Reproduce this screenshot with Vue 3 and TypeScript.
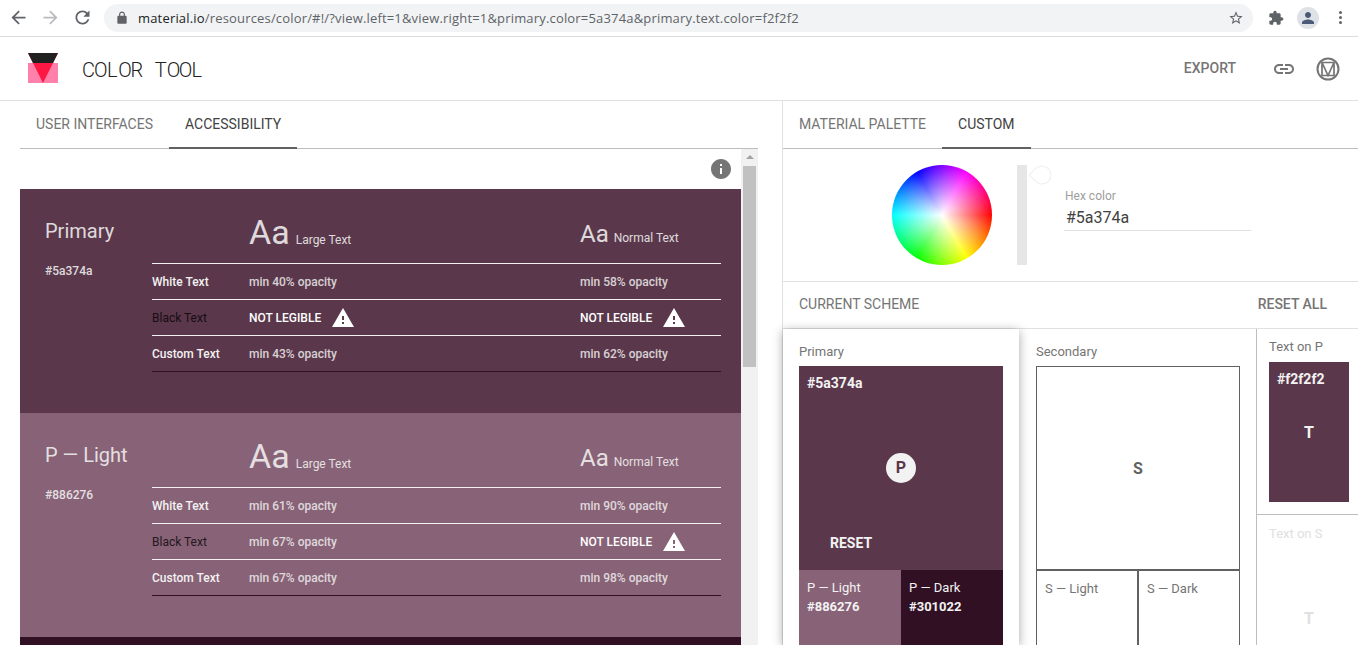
<script setup lang="ts">
interface Row { label: string; large: string; normal: string; warnLarge?: boolean; warnNormal?: boolean; kind: string }
interface Card { name: string; hex: string; bg: string; rows: Row[] }
const cards: Card[] = [
  { name: 'Primary', hex: '#5a374a', bg: '#5a374a', rows: [
    { label: 'White Text', large: 'min 40% opacity', normal: 'min 58% opacity', kind: 'white' },
    { label: 'Black Text', large: 'NOT LEGIBLE', normal: 'NOT LEGIBLE', warnLarge: true, warnNormal: true, kind: 'black' },
    { label: 'Custom Text', large: 'min 43% opacity', normal: 'min 62% opacity', kind: 'custom' },
  ] },
  { name: 'P — Light', hex: '#886276', bg: '#886276', rows: [
    { label: 'White Text', large: 'min 61% opacity', normal: 'min 90% opacity', kind: 'white' },
    { label: 'Black Text', large: 'min 67% opacity', normal: 'NOT LEGIBLE', warnNormal: true, kind: 'black' },
    { label: 'Custom Text', large: 'min 67% opacity', normal: 'min 98% opacity', kind: 'custom' },
  ] },
]
const url = '/resources/color/#!/?view.left=1&view.right=1&primary.color=5a374a&primary.text.color=f2f2f2'
const warning = 'M1 21h22L12 2 1 21zm12-3h-2v-2h2v2zm0-4h-2v-4h2v4z'
const titleChars = 'COLOR TOOL'.split('')
</script>

<template>
  <div class="page">
    <div class="chrome">
      <svg class="nav" viewBox="0 0 24 24" fill="#5f6368"><path d="M20 11H7.830l5.590-5.590L12 4l-8 8 8 8 1.410-1.410L7.830 13H20v-2z" /></svg>
      <svg class="nav" viewBox="0 0 24 24" fill="#b9bbbe"><path d="M4 11h12.170l-5.590-5.590L12 4l8 8-8 8-1.410-1.410L16.170 13H4v-2z" /></svg>
      <svg class="nav" viewBox="0 0 24 24" fill="#5f6368"><path d="M17.650 6.350C16.200 4.900 14.210 4 12 4c-4.420 0-7.990 3.580-7.990 8s3.570 8 7.990 8c3.730 0 6.840-2.550 7.730-6h-2.080c-.82 2.330-3.040 4-5.650 4-3.310 0-6-2.690-6-6s2.690-6 6-6c1.660 0 3.140.69 4.220 1.780L13 11h7V4l-2.350 2.350z" /></svg>
      <div class="omni">
        <svg class="lock" viewBox="0 0 24 24" fill="#5f6368"><path d="M18 8h-1V6c0-2.760-2.240-5-5-5S7 3.240 7 6v2H6c-1.100 0-2 .9-2 2v10c0 1.100.9 2 2 2h12c1.100 0 2-.9 2-2V10c0-1.100-.9-2-2-2zM9 6c0-1.660 1.340-3 3-3s3 1.340 3 3v2H9V6z" /></svg>
        <span class="url"><b>material.io</b>{{ url }}</span>
        <svg class="star" viewBox="0 0 24 24" fill="#5f6368"><path d="M22 9.240l-7.190-.62L12 2 9.190 8.630 2 9.240l5.460 4.730L5.820 21 12 17.270 18.180 21l-1.630-7.030L22 9.240zM12 15.400l-3.760 2.270 1-4.280-3.320-2.880 4.380-.38L12 6.100l1.710 4.040 4.380.38-3.320 2.880 1 4.280L12 15.400z" /></svg>
      </div>
      <svg class="ext" viewBox="0 0 24 24" fill="#5f6368"><path d="M20.500 11H19V7c0-1.100-.9-2-2-2h-4V3.500C13 2.120 11.880 1 10.500 1S8 2.120 8 3.500V5H4c-1.100 0-1.990.9-1.990 2v3.800H3.500c1.490 0 2.700 1.210 2.700 2.700s-1.210 2.700-2.700 2.700H2V20c0 1.100.9 2 2 2h3.800v-1.500c0-1.490 1.210-2.700 2.700-2.700 1.490 0 2.700 1.210 2.700 2.700V22H17c1.100 0 2-.9 2-2v-4h1.500c1.380 0 2.500-1.120 2.500-2.500S21.880 11 20.500 11z" /></svg>
      <div class="avatar">
        <svg viewBox="0 0 24 24" fill="#4a5a78"><path d="M12 12c2.200 0 4-1.800 4-4s-1.800-4-4-4-4 1.800-4 4 1.800 4 4 4zm0 2c-2.700 0-8 1.300-8 4v2h16v-2c0-2.700-5.300-4-8-4z" /></svg>
      </div>
      <div class="dots"><i></i><i></i><i></i></div>
    </div>

    <header class="top">
      <svg class="logo" viewBox="0 0 30 30">
        <rect x="0" y="10" width="30" height="20" fill="#ff80ab" />
        <polygon points="0,0 30,0 15,30" fill="#ff1744" />
        <polygon points="0,0 30,0 25,10 5,10" fill="#212121" />
      </svg>
      <div class="title"><span v-for="(ch, i) in titleChars" :key="i">{{ ch }}</span></div>
      <div class="export">EXPORT</div>
      <svg class="link" viewBox="0 0 24 24" fill="#757575"><path d="M3.900 12c0-1.710 1.390-3.100 3.100-3.100h4V7H7c-2.760 0-5 2.240-5 5s2.240 5 5 5h4v-1.900H7c-1.710 0-3.100-1.390-3.100-3.100zM8 13h8v-2H8v2zm9-6h-4v1.900h4c1.710 0 3.100 1.390 3.100 3.100s-1.390 3.100-3.100 3.100h-4V17h4c2.760 0 5-2.240 5-5s-2.240-5-5-5z" /></svg>
      <svg class="mlogo" viewBox="0 0 24 24" fill="none" stroke="#757575">
        <circle cx="12" cy="12" r="10.500" stroke-width="2" />
        <path d="M6 5.500H18V18.500H6ZM6 5.500L12 18.500L18 5.500" stroke-width="1.700" />
      </svg>
    </header>

    <main class="split">
      <section class="left">
        <nav class="tabs left-tabs">
          <div class="tab">USER INTERFACES</div>
          <div class="tab active">ACCESSIBILITY</div>
        </nav>
        <div class="scroller">
          <div class="content">
            <div class="info-row">
              <svg class="info" viewBox="2 2 20 20" fill="#757575"><path d="M12 2C6.480 2 2 6.480 2 12s4.480 10 10 10 10-4.480 10-10S17.520 2 12 2zm1 15h-2v-6h2v6zm0-8h-2V7h2v2z" /></svg>
            </div>
            <article v-for="c in cards" :key="c.name" class="card" :style="{ background: c.bg }">
              <div class="card-name">
                <h2>{{ c.name }}</h2>
                <p>{{ c.hex }}</p>
              </div>
              <div class="table">
                <div class="thead">
                  <div class="blank"></div>
                  <div class="large-head"><span class="aa-l">Aa</span><span class="hint">Large Text</span></div>
                  <div class="normal-head"><span class="aa-n">Aa</span><span class="hint">Normal Text</span></div>
                </div>
                <div v-for="r in c.rows" :key="r.label" class="row" :class="r.kind">
                  <div class="row-label">{{ r.label }}</div>
                  <div class="cell" :class="{ warn: r.warnLarge }">
                    {{ r.large }}
                    <svg v-if="r.warnLarge" viewBox="1 2 22 19" fill="#fff"><path :d="warning" /></svg>
                  </div>
                  <div class="cell" :class="{ warn: r.warnNormal }">
                    {{ r.normal }}
                    <svg v-if="r.warnNormal" viewBox="1 2 22 19" fill="#fff"><path :d="warning" /></svg>
                  </div>
                </div>
              </div>
            </article>
            <div class="card-stub"></div>
          </div>
          <div class="scrollbar">
            <div class="sb-arrow"></div>
            <div class="sb-thumb"></div>
          </div>
        </div>
      </section>

      <section class="right">
        <nav class="tabs right-tabs">
          <div class="tab">MATERIAL PALETTE</div>
          <div class="tab active">CUSTOM</div>
        </nav>
        <div class="picker">
          <div class="wheel"></div>
          <div class="slider"><div class="thumb"></div></div>
          <div class="hex">
            <label>Hex color</label>
            <div class="hex-value">#5a374a</div>
          </div>
        </div>
        <div class="scheme-head">
          <span>CURRENT SCHEME</span>
          <span class="reset-all">RESET ALL</span>
        </div>
        <div class="scheme">
          <div class="col primary">
            <div class="col-label">Primary</div>
            <div class="swatch main-p">
              <div class="sw-hex">#5a374a</div>
              <div class="circle">P</div>
              <div class="reset">RESET</div>
            </div>
            <div class="pair">
              <div class="sub p-light"><span>P — Light</span><b>#886276</b></div>
              <div class="sub p-dark"><span>P — Dark</span><b>#301022</b></div>
            </div>
          </div>
          <div class="col secondary">
            <div class="col-label">Secondary</div>
            <div class="swatch main-s">S</div>
            <div class="pair outlined">
              <div class="sub s-sub"><span>S — Light</span></div>
              <div class="sub s-sub"><span>S — Dark</span></div>
            </div>
          </div>
          <div class="text-col">
            <div class="text-on-p">
              <div class="t-label">Text on P</div>
              <div class="t-swatch">
                <div class="t-hex">#f2f2f2</div>
                <div class="t-letter">T</div>
              </div>
            </div>
            <div class="text-on-s">
              <div class="t-label">Text on S</div>
              <div class="t-letter">T</div>
            </div>
          </div>
        </div>
      </section>
    </main>
  </div>
</template>

<style>
html, body { margin: 0; overflow: hidden; background: #fff; }
</style>

<style scoped>
* { box-sizing: border-box; }
.page { width: 1358px; height: 645px; overflow: hidden; font-family: Roboto, "Liberation Sans", sans-serif; display: flex; flex-direction: column; background: #fff; }

.chrome { height: 37px; flex: none; display: flex; align-items: center; border-bottom: 1px solid #dadce0; padding: 0 0 1px 8px; }
.nav { width: 21px; height: 21px; margin-right: 11px; flex: none; }
.omni { width: 1149px; height: 28px; border-radius: 14px; background: #f1f3f4; display: flex; align-items: center; padding: 0 9px 0 11px; flex: none; }
.lock { width: 14px; height: 14px; flex: none; }
.url { margin-left: 9px; font: 13px/28px "Open Sans", sans-serif; letter-spacing: .175px; color: #5f6368; white-space: nowrap; flex: 1; }
.url b { font-weight: 400; color: #202124; }
.star { width: 16px; height: 16px; flex: none; }
.ext { width: 16px; height: 16px; margin-left: 15px; flex: none; }
.avatar { width: 22px; height: 22px; border-radius: 50%; background: #dee1e6; margin-left: 13px; display: flex; align-items: center; justify-content: center; flex: none; }
.avatar svg { width: 18px; height: 18px; }
.dots { display: flex; flex-direction: column; gap: 2px; margin-left: 20px; }
.dots i { width: 3px; height: 3px; border-radius: 50%; background: #5f6368; display: block; }

.top { height: 64px; flex: none; border-bottom: 1px solid #e0e0e0; display: flex; align-items: center; padding: 0 18px 0 28px; }
.logo { width: 30px; height: 30px; flex: none; margin-top: -1px; }
.title { margin-left: 24px; padding-top: 2px; font: 300 20px/24px Roboto, sans-serif; color: #212121; flex: 1; display: flex; }
.title span { width: 12.100px; min-height: 24px; text-align: center; white-space: pre; }
.export { font-size: 14px; font-weight: 500; color: #757575; margin-top: -2px; }
.link { width: 24px; height: 24px; margin-left: 36px; }
.mlogo { width: 24px; height: 24px; margin-left: 20px; }

.split { flex: 1; display: flex; min-height: 0; }
.left { width: 783px; flex: none; border-right: 1px solid #e0e0e0; padding-left: 20px; display: flex; flex-direction: column; min-height: 0; }
.right { flex: 1; display: flex; flex-direction: column; min-width: 0; }
.tabs { height: 48px; flex: none; display: flex; border-bottom: 1px solid #bdbdbd; }
.left-tabs { width: 738px; }
.tab { padding: 0 16px; font-size: 14px; line-height: 47px; color: #757575; height: 48px; }
.tab.active { color: #424242; border-bottom: 2px solid #616161; }

.scroller { flex: 1; display: flex; width: 738px; min-height: 0; overflow: hidden; }
.content { width: 721px; flex: none; }
.info-row { height: 40px; display: flex; justify-content: flex-end; align-items: flex-start; padding: 10px 10px 0 0; }
.info { width: 20px; height: 20px; }
.card { height: 224px; display: flex; color: #f2f2f2; }
.card-stub { height: 40px; background: #301022; }
.card-name { width: 132px; flex: none; padding: 30px 0 0 25px; }
.card-name h2 { margin: 0; font-size: 20px; font-weight: 400; line-height: 24px; opacity: .87; }
.card-name p { margin: 20px 0 0; font-size: 12px; font-weight: 500; line-height: 16px; opacity: .87; }
.table { width: 569px; flex: none; }
.thead { height: 75px; display: flex; align-items: flex-start; border-bottom: 1px solid #f2f2f2; }
.blank, .row-label { width: 97px; flex: none; }
.large-head, .row .cell:nth-child(2) { width: 331px; flex: none; }
.large-head, .normal-head { height: 74px; display: flex; align-items: baseline; white-space: nowrap; line-height: 40px; }
.large-head { padding-top: 23px; }
.normal-head { padding-top: 25px; }
.aa-l { font-size: 34px; opacity: .87; }
.aa-n { font-size: 24px; opacity: .87; }
.hint { margin-left: 5px; font-size: 12px; opacity: .87; }
.large-head .hint { margin-left: 6px; }
.row { height: 36px; display: flex; align-items: center; border-bottom: 1px solid #f2f2f2; font-size: 12px; line-height: 16px; }
.row.custom { border-bottom-color: #301022; }
.row-label { font-weight: 500; }
.row.black .row-label { color: #000; font-weight: 400; opacity: .75; }
.cell { font-weight: 500; opacity: .82; display: flex; align-items: center; }
.cell.warn { color: #fff; opacity: 1; }
.cell svg { width: 22px; height: 19px; margin-left: 11px; }

.scrollbar { width: 17px; flex: none; background: #f1f1f1; padding: 0 2px; }
.sb-arrow { height: 17px; padding-top: 6px; }
.sb-arrow::after { content: ""; display: block; margin: 0 auto; width: 0; border: 4px solid transparent; border-top: 0; border-bottom: 4px solid #a3a3a3; }
.sb-thumb { height: 201px; background: #c1c1c1; }

.picker { height: 133px; flex: none; display: flex; border-bottom: 1px solid #e0e0e0; padding: 16px 0 0 109px; }
.wheel { width: 100px; height: 100px; border-radius: 50%; flex: none; background:
  radial-gradient(circle closest-side, #fff 0%, rgba(255,255,255,0) 100%),
  conic-gradient(from 90deg, #f00, #ff0 60deg, #0f0 120deg, #0ff 180deg, #00f 240deg, #f0f 300deg, #f00 360deg); }
.slider { width: 10px; height: 100px; margin-left: 25px; background: #e6e6e6; flex: none; position: relative; }
.thumb { position: absolute; left: 15px; top: 0; width: 20px; height: 20px; background: #fff; border: 1px solid #eee; border-radius: 50% 50% 50% 0; transform: rotate(45deg) scale(.95); }
.hex { margin-left: 37px; width: 187px; padding-top: 24px; }
.hex label { display: block; padding-left: 1px; font-size: 12px; line-height: 14px; color: #9e9e9e; }
.hex-value { height: 28px; padding: 5px 0 0 2px; border-bottom: 1px solid #e0e0e0; font-size: 16px; line-height: 20px; color: #424242; }

.scheme-head { height: 47px; flex: none; display: flex; justify-content: space-between; align-items: center; padding: 0 31px 2px 16px; font-size: 14px; color: #757575; border-bottom: 1px solid #e0e0e0; }
.reset-all { font-weight: 500; }
.scheme { flex: 1; display: flex; min-height: 0; }
.col { flex: none; padding-top: 16px; }
.col.primary { width: 236px; padding-left: 16px; background: #fff; box-shadow: 0 2px 10px rgba(0,0,0,.35); z-index: 1; }
.col.secondary { width: 238px; padding-left: 17px; border-right: 1px solid #bdbdbd; }
.col-label { font-size: 13px; line-height: 14px; color: #757575; margin-bottom: 7px; }
.swatch { width: 204px; height: 204px; }
.main-p { background: #5a374a; color: #f2f2f2; padding: 9px 8px 0; display: flex; flex-direction: column; }
.sw-hex { font-size: 14px; font-weight: 700; line-height: 16px; }
.circle { width: 30px; height: 30px; margin: 62px auto 0; border-radius: 50%; background: #f2f2f2; color: #5a374a; font-size: 16px; font-weight: 700; line-height: 30px; text-align: center; }
.reset { margin: 52px 0 0 23px; font-size: 14px; font-weight: 700; line-height: 16px; }
.main-s { border: 1px solid #616161; display: flex; align-items: center; justify-content: center; font-size: 16px; font-weight: 700; color: #616161; }
.pair { display: flex; width: 204px; height: 102px; }
.sub { width: 102px; padding: 8px; font-size: 13px; line-height: 19px; display: flex; flex-direction: column; }
.sub b { font-weight: 700; }
.p-light { background: #886276; color: #f2f2f2; }
.p-dark { background: #301022; color: #f2f2f2; }
.s-sub { border: 1px solid #616161; color: #757575; }
.text-col { flex: 1; min-width: 0; }
.text-on-p { height: 186px; padding: 11px 0 0 12px; border-bottom: 1px solid #bdbdbd; }
.t-label { font-size: 13px; line-height: 14px; color: #757575; margin-bottom: 8px; }
.t-swatch { width: 80px; height: 140px; background: #5a374a; color: #f2f2f2; padding: 9px 8px; }
.t-hex { font-size: 14px; font-weight: 700; line-height: 16px; }
.t-letter { font-size: 16px; font-weight: 700; text-align: center; line-height: 16px; }
.t-swatch .t-letter { margin-top: 38px; }
.text-on-s { padding: 12px 0 0 12px; width: 93px; color: #e0e0e0; }
.text-on-s .t-label { color: #e0e0e0; }
.text-on-s .t-letter { width: 80px; margin-top: 70px; color: #e0e0e0; }
</style>
